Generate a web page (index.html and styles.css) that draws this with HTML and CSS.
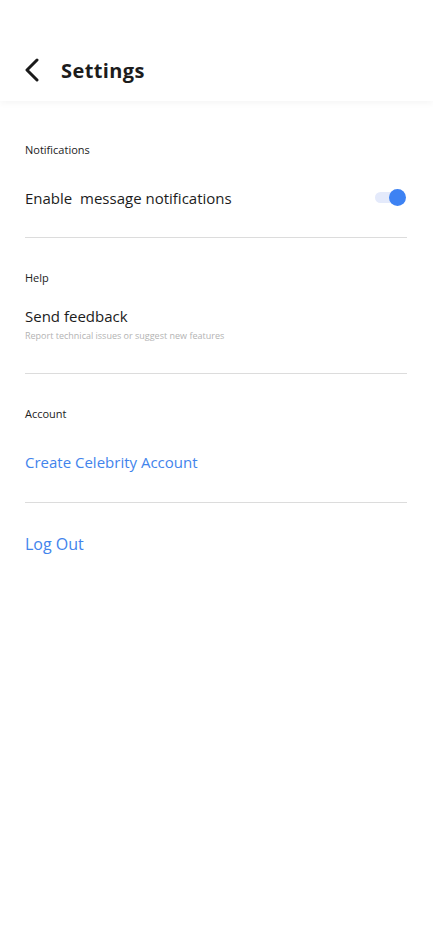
FILE: index.html
```html
<!DOCTYPE html>
<html>
<head>
<meta charset="utf-8">
<link rel="stylesheet" href="styles.css">
</head>
<body>
<header class="header">
  <svg class="back" width="16" height="24" viewBox="0 0 16 24"><path d="M13 2 L3 12 L13 22" fill="none" stroke="#1a1a1a" stroke-width="3" stroke-linecap="round" stroke-linejoin="round"/></svg>
  <h1 class="title">Settings</h1>
</header>
<main class="content">
  <section class="section sec-notif">
    <div class="label">Notifications</div>
    <div class="row toggle-row">
      <span class="row-text">Enable&nbsp; message notifications</span>
      <span class="toggle"><span class="knob"></span></span>
    </div>
  </section>
  <section class="section sec-help">
    <div class="label">Help</div>
    <div class="row-stack">
      <span class="row-text">Send feedback</span>
      <span class="sub">Report technical issues or suggest new features</span>
    </div>
  </section>
  <section class="section sec-account">
    <div class="label">Account</div>
    <div class="row link-row"><span class="link">Create Celebrity Account</span></div>
  </section>
  <div class="logout"><span class="link link-lg">Log Out</span></div>
</main>
</body>
</html>
```
FILE: styles.css
```css
* { box-sizing: border-box; }
html, body { margin: 0; padding: 0; background: #fff; }
body { font-family: "Open Sans", "Noto Sans", sans-serif; color: #1c1c1c; width: 433px; }
.header {
  height: 101px;
  display: flex;
  align-items: center;
  padding: 42px 0 0 24px;
  box-shadow: 0 3px 6px rgba(0,0,0,0.035);
}
.back { margin-right: 21px; margin-top: -4px; }
.title { margin: 0; font-size: 20px; line-height: 28px; font-weight: 700; letter-spacing: 0.4px; margin-top: -2px; }
.content { padding: 0 26px 0 25px; }
.section { border-bottom: 1px solid #dcdcdc; }
.label { font-size: 11px; line-height: 16px; color: #222; }
.sec-notif .label { padding-top: 41px; }
.sec-help .label, .sec-account .label { padding-top: 32px; }
.row { display: flex; align-items: center; justify-content: space-between; }
.toggle-row { height: 79px; }
.row-text { font-size: 15px; line-height: 20px; }
.toggle { position: relative; width: 30px; height: 11px; background: #e4eafb; border-radius: 6px; margin-right: 2px; }
.knob { position: absolute; right: -1px; top: -3px; width: 17px; height: 17px; border-radius: 50%; background: #3d82f3; }
.row-stack { display: flex; flex-direction: column; padding-top: 20px; padding-bottom: 31px; }
.sub { font-size: 9px; line-height: 12px; color: #b3b3b3; margin-top: 4px; }
.link { color: #4284ec; font-size: 15px; line-height: 20px; }
.link-row { height: 80px; }
.logout { padding-top: 30px; }
.link-lg { font-size: 16px; line-height: 22px; }
```
